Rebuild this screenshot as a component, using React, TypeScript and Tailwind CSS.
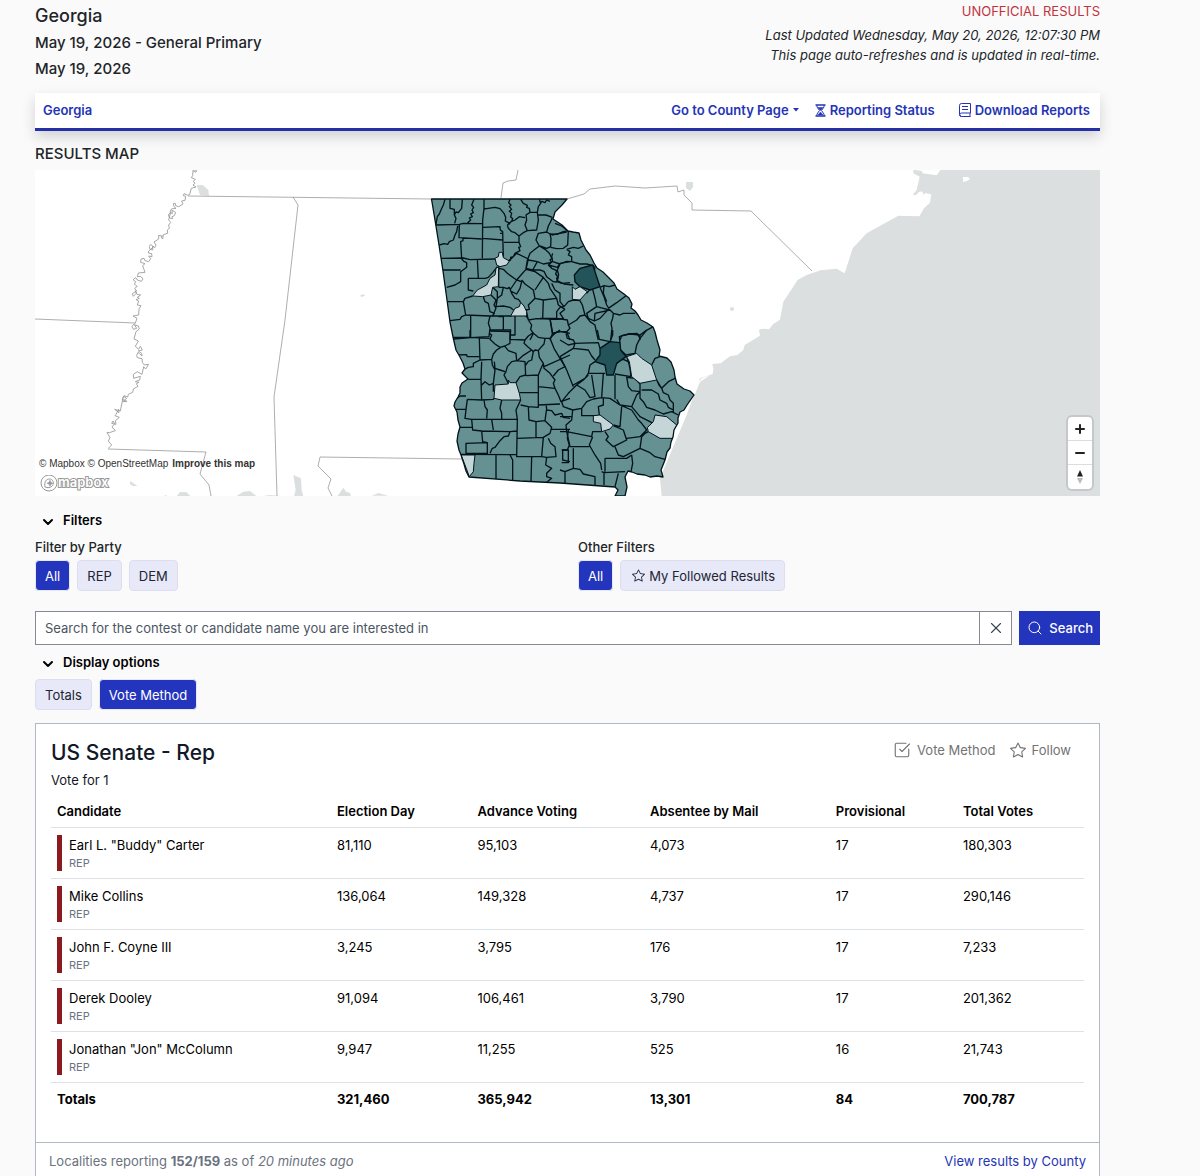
import React, { useState } from "react";
import { ChevronDown, Search, SquareCheckBig, X } from "lucide-react";
import { BsStar } from "react-icons/bs";

const methods = ["Election Day", "Advance Voting", "Absentee by Mail", "Provisional", "Total Votes"];

const candidates = [
  { name: 'Earl L. "Buddy" Carter', party: "REP", votes: ["81,110", "95,103", "4,073", "17", "180,303"] },
  { name: "Mike Collins", party: "REP", votes: ["136,064", "149,328", "4,737", "17", "290,146"] },
  { name: "John F. Coyne III", party: "REP", votes: ["3,245", "3,795", "176", "17", "7,233"] },
  { name: "Derek Dooley", party: "REP", votes: ["91,094", "106,461", "3,790", "17", "201,362"] },
  { name: 'Jonathan "Jon" McColumn', party: "REP", votes: ["9,947", "11,255", "525", "16", "21,743"] },
];

const totals = ["321,460", "365,942", "13,301", "84", "700,787"];

const GEORGIA =
  "M431.5 199L435 220 439 245 443 271 447 300 450 322 453 337 456 350 460 357 463 363 465 369 462 373 465 376 468 379 462 383 460 387 460 393 458 397 455 402 454 406 457 412 458 420 460 427 458 434 457 441 459 450 461 455 464 464 466 471 469 477 520 481 560 483 615 487 618 490 615 496 625 496 627 487 625 477 628 471 632 472 637 474 645 475 650 477 657 476 663 477 661 470 665 460 667 452 670 448 671 442 673 437 674 430 678 423 678 418 680 412 684 410 687 405 694 395 690 391 684 389 677 384 675 377 674 370 671 362 667 358 663 357 659 356 660 350 657 340 655 332 653 327 647 323 641 320 638 315 635 311 631 308 632 304 629 298 624 294 617 289 614 283 608 277 603 272 597 268 594 263 590 255 586 250 584 246 581 240 579 233 573 232 568 231 562 225 553 219 555 212 562 205 567 199Z";

// County lines, drawn one quarter of the state at a time
const NORTHWEST =
  "M48 105L118 103 130 100 187 101M75 28L70 45 64 58 58 72 52 80 48 102M90 28V55L103 58V75L108 85 104 100M127 28L125 55 115 68 108 66 103 75M162 28L155 45 161 52 156 60 160 68 152 72 157 80 148 84 152 90 143 98M192 28V55L188 90 187 205M192 57L205 55 225 52 240 56 252 70 257 82 256 93 264 97 270 103M270 28L266 38 273 45 268 50 275 58 268 64 275 70 272 80 278 86 275 94 262 105M188 112L240 110 241 120 248 125 250 200M118 103L117 143 185 147M113 108L110 125 105 135 100 150 88 155 83 163 72 161 58 165M129 145V152L122 155 125 205M63 205L130 204 150 209 225 207M188 145L248 150M240 130H250M252 157H297M262 105L265 115 275 125 285 128 297 138V157L302 170 296 172 300 182 285 190 280 200 272 202V210L262 215M302 28L310 40 322 46 320 52 328 55 330 67M275 94L285 90 298 80 315 83M330 67L318 75 320 90 315 105 322 122 310 128 297 138M330 67L352 67 355 50 362 40 358 28M352 67L355 90 350 120 322 122M355 75L378 75 397 82M360 40L366 34 375 38 380 30 390 34M397 82L392 95 385 108 380 126 355 130 348 150 358 168 345 178 330 190 322 210M380 126L390 132 393 145 392 170 380 175 360 168M390 132L410 133 430 125 445 122M445 122L443 165 430 175 410 176 392 172M172 208L175 265M125 207L133 215 140 218V232L122 245V275L105 285 80 292M66 240H122M145 265H195L205 262 218 248 232 230M145 265V300L160 303M158 318L135 325 130 335H83M130 335L137 375 210 378M137 375L125 380 120 388 90 392M152 377V443L100 447M210 378L205 400 210 415 207 440 152 443M190 320L195 335 205 340 210 365 223 370 215 380M213 315L228 330 222 345 228 355 222 368M228 350L250 348 270 352 280 360M218 292L232 305V325L228 350M236 292H250L245 315 232 325M250 292L262 296 268 292 275 310 285 325 295 328 302 337M236 230V292M238 235L250 238 262 250 290 270M262 215L275 205 290 190 325 207 318 238 303 255 290 270 280 285 270 300M290 270L305 275 300 295 290 312 275 305M305 270L315 282 340 300 345 325M318 238L345 245 370 262 358 280 345 300M322 210L318 235 338 240 352 215 325 210M352 215L370 222 395 217M358 168L375 178 388 190 396 205 390 210 395 217 385 225 395 235 410 242 407 252 415 262 410 276 400 275 380 260 372 244 360 240 340 240M385 225L412 232 420 220 450 215M412 275L425 280 450 278M370 262L385 280 390 295 400 310 410 325 370 330 345 325M345 325L335 335 325 345 328 358 318 360 325 390M275 378H210M250 380V420H272L270 450M250 380L235 380M250 420H210M285 378V435H272M325 390L350 386 390 387M325 390L335 405 332 418 340 430 330 450M370 330L368 387M410 325L415 345 435 358M390 387L397 430 420 424 450 430M435 358L420 370 430 385 415 388 390 387M318 378L326 388";

const NORTHEAST =
  "M80 178L100 172 115 175 130 168M80 178L90 185 85 195 95 200V215L120 222 140 222 162 228M38 190L35 200 38 215 60 222 80 214 95 215M60 222L52 240 56 255 50 265 52 272 72 282 100 285M35 280L45 300 60 310V335L72 350M72 350L85 335 100 330 120 332M72 350L60 352 50 365V385L82 390 85 405 110 390 120 378 135 375 127 345 120 332M0 385H50M150 298L140 310M158 298L165 325 170 350 190 355 210 360 200 345 192 320 180 292M180 292L192 287 208 290 225 285M192 287L190 310 200 335M205 355L230 338 258 317M210 360L220 370 240 375 250 370 285 370M220 370L218 385 213 400 216 415 212 450M170 350L140 370 145 385 163 393 165 370 210 360M163 393L180 385 205 358M135 375L150 395 165 405 170 430 175 450M300 435L318 422 340 410M240 450L245 437 270 432 300 435 300 450M85 405L90 415 80 425 90 450M30 385L38 430 60 425 80 425M38 430L30 450M45 100L65 108 80 120M35 135L60 130 80 126M165 228L163 245";

const SOUTHWEST =
  "M65 22H120V0M120 22L178 25M178 10L185 15 180 28 195 42 210 52 225 48 240 40V5L178 3M148 25L150 90M75 75L110 74 112 80 148 80M150 90L130 100 130 110 115 112 103 118M150 90L185 88 190 72 200 60 212 52M155 95L153 148 115 148M185 88L187 105 195 120 190 160 190 185M193 95L195 115 210 120 225 125M225 50L235 62 258 70 260 92 285 95 287 135 270 140 258 158M228 125L232 110 245 95 260 92M240 28L285 30 295 18 310 8M285 30L282 40 295 52 305 60 280 76 262 92M305 60L310 65 315 60 325 62 330 55 342 42 345 25 325 22 310 10M325 62L328 82 340 100 332 118 325 135 287 137M310 65L305 90 295 94 287 105M228 125L222 135 235 160M153 148L155 210 112 208M155 165L165 155 178 165 190 160M192 205L190 208 155 210M325 135V232L295 230 272 225M268 188H325M272 210L258 240 262 268 260 380M108 198L90 198 80 205M112 208L108 238H78M108 238L105 265 125 268 128 300 155 303 240 305 260 303M125 268H262M162 210L165 230 172 240 170 265M215 210L210 235 215 250V268M185 268L190 300M88 292H128M155 303L158 335 172 338V370H108V340L172 338M240 305L235 318 222 320 210 332 195 352 187 355 180 370M93 373L260 374V380L335 380M260 325L340 322 335 380M295 230L297 270 318 275V322M318 275L345 272 350 235 348 225M325 170L375 175M325 225L390 222M340 100L342 115 360 130 375 150 370 160 375 175 385 195 393 215 420 205M342 110L420 75M360 25L372 55 390 85 405 110 385 120 370 138M390 0L375 10 360 25 345 25M345 272L365 292 360 310 340 322M365 298L420 298M355 325L362 340 375 350 378 380 350 382M348 240L365 242 375 255 395 250 400 262 420 265M198 375V447M240 375L248 390V450M305 380L303 455M335 380L350 382 347 405 365 415 350 430 350 440 365 445 350 457M415 300L412 325 418 345 412 360H398V390L420 395";

const SOUTHEAST =
  "M0 80L40 55 85 60 95 78 105 90M40 55L45 40 115 38 120 55M0 30L25 45 45 40M18 10L22 25 40 30 45 40M0 80L20 120 40 170M112 0L118 28 150 35 158 15 158 0M180 38L178 20 205 12 232 10M240 25L230 45 225 70M232 10L240 25 260 0M182 60L198 75 225 70M170 100L178 90 190 88 205 95 210 115 213 140 165 132M200 78L205 95M275 105L285 85 300 80M290 150L305 175 325 155 345 145M290 150L297 165 305 175 310 188 325 195 330 210 340 220 340 245M40 165L75 145 85 130 90 105 105 95M85 130L135 130M95 135L105 200 90 203 75 180 50 165 25 190 5 215 10 230 38 240M50 165L70 150 85 135M38 240L65 235 80 215 100 207 125 203M130 130L125 203 150 205 180 225M165 135V208M170 208L180 225 215 230 230 195 240 185M200 140L205 170 215 182 240 185 240 162M245 180L275 180 295 192 300 210 320 220 325 232 340 240M240 185L240 205 250 215 260 232 285 240 310 252 335 245 355 255M215 230L240 260 280 280M200 142L225 145 240 162M185 230L180 290 160 285M180 225L215 240 235 270 245 280 260 300 240 320 200 325M130 203L130 225 115 230 118 255M65 235V257H115M38 240L35 270 18 285 20 305 95 320 98 305 125 305M0 260H35M0 305H20L30 350H88M135 305L145 320 138 330 160 350 180 340 200 330 190 300 160 287M98 320L88 345 105 375 122 400 125 420M40 355V415M135 385L200 385 215 375M135 385V425M165 350L175 375 190 380 240 355 245 320M240 355L270 368 285 380 315 388M265 305L255 310 245 320M215 375L218 400 213 425M125 425L132 428 195 425M40 415L60 418 70 432 105 440V465M15 460L15 425 40 415M132 428L132 465M175 430L165 470M5 360H25V398H5M0 420L15 425";

const RIVER =
  "M485 14L500 16 497 22 489 17 488 32 484 38 496 43 490 49 495 55 489 60 498 66 484 70 479 88 474 91 462 86 460 92 467 94 465 106 455 108 459 117 446 125 437 122 436 115 430 116 432 125 438 130 424 132 420 142 427 146 426 136 437 142 433 152 426 155 428 161 419 159 415 150 422 142 416 165 422 172 416 180 418 190 412 195 413 205 400 209 398 222 393 216 397 213 386 211 386 222 372 231 378 240 374 248 368 243 368 255 360 253 358 244 362 238 370 246 356 258 355 264 365 266 366 275 356 273 362 281 356 290 345 287 342 280 333 282 332 292 345 296 338 302 345 322 325 324 322 335 332 334 339 342 334 349 322 345 317 338 309 344 317 350 313 358 322 364 314 370 320 378 307 386 310 394 319 385 316 377 321 388 332 390 322 397 328 400 318 404 326 408 322 420 333 422 327 432 326 450 309 453 321 460 316 474 306 484 310 493 320 490 313 479 325 483 328 492 318 500 312 522 325 528 316 544 326 553 331 544 337 555 325 558 335 565 336 573 324 562 320 571 322 578 336 581 337 592 343 600 356 598 347 612 341 605 336 628 322 620 310 628 311 640 331 634 329 645 316 650 327 652 319 656 324 664 310 672 308 682 295 688 293 696 282 692 277 703 291 709 278 710 290 700 280 694 271 738 254 733 267 743 266 733 258 748 255 752 268 757 256 767 258 778 245 775 249 768 254 776 246 786 256 797 238 803 231 802 240 818 235 828 245 840 235 850";

function ResultsMap() {
  return (
    <section className="relative h-[326px] overflow-hidden bg-white" aria-label="Results map">
      <svg className="h-full w-full" viewBox="35 170 1065 326" preserveAspectRatio="xMidYMid slice">
        <clipPath id="georgia-outline">
          <path d={GEORGIA} />
        </clipPath>

        {/* Water */}
        <g fill="#dbdfdf">
          <path transform="translate(700 165) scale(.33333)" d="M640 14L665 18 668 25 710 31 722 14H1202V995H-115L-120 940 -40 750 0 640 38 627 40 612 37 597 62 595 90 574 112 570 130 555 134 540 180 512 177 494 187 491 207 493 220 477 240 464 250 410 293 345 320 330 362 316 410 311 434 325 458 250 500 205 595 152 658 154 672 130 690 113 694 88 675 84 671 90 667 79 655 82 649 90 638 89 650 75 659 35 640 25Z" />
          <path transform="translate(30 165) scale(.33333)" d="M500 60L518 60 535 75 537 92 510 90ZM990 392L1000 387 1005 392 995 396ZM300 948L322 962 310 964 300 958ZM400 994L408 990 412 994ZM440 994L450 981 470 982 482 994ZM618 994L640 980 660 978 680 994ZM695 994L720 990 765 994ZM790 930L813 940 815 975 820 994H792L797 975ZM922 994L940 968 948 980 960 984 963 994ZM1025 992L1045 984 1075 992Z" />
          <path d="M686 182h7v5l-3 4-4-3z" />
          <circle cx="732" cy="309" r="2" />
        </g>
        <path d="M963 177h5l2 2-3 2-4 1z" fill="#fff" />
        <path d="M660 475L664 455 674 427 680 412 695 394 700 382 710 375 702 378 695 386 687 389 655 340 640 400z" fill="#fff" />

        {/* State lines */}
        <g fill="none" stroke="#999" strokeWidth="0.8">
          <path d="M188 196L431 199M293 197L298 205 285 320 274 397 277 496M35 319L135 323M108 449L206 452 200 474 209 485 211 496M320 457L462 459M320 457L318 466 331 479 328 488 332 496M501 198L503 183 508 181 516 180 518 170M567 199L584 194 590 189 615 186 645 188 677 186 678 192 684 190 684 195 692 203V210L751 211 812 271" />
          <path d={RIVER} transform="translate(30 165) scale(.33333)" strokeWidth="2.6" />
        </g>

        {/* Counties */}
        <path d={GEORGIA} fill="#669193" />
        <g clipPath="url(#georgia-outline)" stroke="#00131a" strokeWidth="4" strokeLinejoin="round">
          <g transform="translate(420 190) scale(.33333)">
            <path d={NORTHWEST} fill="none" />
            <path d="M225 205L235 200 237 187H247L250 203 268 213 260 225 240 230 230 225ZM236 230L235 290 218 292 213 315 188 320 158 318 172 300 200 285 210 265 225 255 228 235ZM302 337L312 348 320 365V378H272L285 355 298 350Z" fill="#c5d6d9" strokeWidth="3" />
          </g>
          <g transform="translate(540 190) scale(.33333)">
            <path d={NORTHEAST} fill="none" />
            <path d="M103 255L120 235 158 225 165 245 180 290 150 300 120 290 105 275Z" fill="#225459" />
            <path d="M97 290L105 298 120 290 142 305 120 330 97 328Z" fill="#c5d6d9" strokeWidth="3" />
          </g>
          <g transform="translate(430 330) scale(.33333)">
            <path d={SOUTHWEST} fill="none" />
            <path d="M195 165L235 162V150L240 158H258L268 190 272 210H215L192 205ZM93 375H135L132 400 130 425 118 440 103 400Z" fill="#c5d6d9" strokeWidth="3" />
          </g>
          <g transform="translate(560 330) scale(.33333)">
            <path d={SOUTHEAST} fill="none" />
            <path d="M150 35L180 38 182 60 198 80 170 100 160 135H140L135 105 105 95 120 75 120 55Z" fill="#225459" />
            <path d="M200 80L230 70 245 85 275 105 290 150 240 160 215 140 208 95ZM100 257L120 255 160 285 150 297 125 305 122 280 100 275ZM262 293L280 275 285 255 320 260 350 285 340 325 300 325 265 305Z" fill="#c5d6d9" strokeWidth="3" />
          </g>
        </g>
        <path d={GEORGIA} fill="none" stroke="#00131a" strokeWidth="1.3" strokeLinejoin="round" />
      </svg>

      {/* Attribution */}
      <div className="absolute bottom-1 left-1 font-['Liberation_Sans',sans-serif] text-[10px] leading-4 text-[#333]">
        <p className="flex gap-1">
          <span>© <a href="#mapbox">Mapbox</a> © <a href="#osm">OpenStreetMap</a></span>
          <a href="#improve" className="font-bold">Improve this map</a>
        </p>
        <a href="#mapbox" className="mt-1 flex h-4 items-center">
          <svg width="88" height="18" viewBox="0 0 88 18" aria-label="mapbox">
            <g fill="#fff" stroke="#999" strokeWidth="1">
              <circle cx="10" cy="8" r="8" />
              <path d="M6 12c-1-5 1-8 4.500-8s5 4 3 6.500-5 2.500-7.500 1.500z" />
              <path d="M11 5l1 2.200 2.200 1-2.200 1-1 2.200-1-2.200-2.200-1 2.200-1z" fill="#999" strokeWidth="0.4" />
            </g>
            <text x="19" y="12" fontFamily="Inter, sans-serif" fontSize="13" fontWeight="600" fill="#fff" stroke="#999" strokeWidth="2" paintOrder="stroke">mapbox</text>
          </svg>
        </a>
      </div>

      {/* Zoom controls */}
      <div className="absolute right-2 bottom-[7px] flex w-6 flex-col divide-y divide-[#ddd] rounded bg-white ring-2 ring-black/10">
        <button className="flex h-6 items-center justify-center" aria-label="Zoom in">
          <svg width="10" height="10" viewBox="0 0 10 10" stroke="#222" strokeWidth="2" strokeLinecap="round"><path d="M5 1v8M1 5h8" /></svg>
        </button>
        <button className="flex h-6 items-center justify-center" aria-label="Zoom out">
          <svg width="10" height="10" viewBox="0 0 10 10" stroke="#222" strokeWidth="2" strokeLinecap="round"><path d="M1 5h8" /></svg>
        </button>
        <button className="flex h-6 items-center justify-center" aria-label="Reset bearing">
          <svg width="8" height="16" viewBox="0 0 8 16"><path d="M1 7.500L4 1l3 6.500z" fill="#222" /><path d="M1 9l3 6 3-6z" fill="#bbb" /></svg>
        </button>
      </div>
    </section>
  );
}

type PillProps = { active: boolean; onClick: () => void; children: React.ReactNode };

function Pill({ active, onClick, children }: PillProps) {
  return (
    <button
      onClick={onClick}
      aria-pressed={active}
      className={
        active
          ? "flex h-[31px] items-center gap-1 rounded border border-[#e6e7f7] bg-[#2435bd] px-[9px] text-white"
          : "flex h-[31px] items-center gap-1 rounded border border-[#dcdef0] bg-[#e8e9f8] px-[9px] text-[#212433]"
      }
    >
      {children}
    </button>
  );
}

function SectionToggle({ children }: { children: React.ReactNode }) {
  return (
    <button className="flex h-6 items-center gap-[7px] px-[5px] font-semibold text-black">
      <ChevronDown className="mt-1 h-4 w-4" strokeWidth={3} />
      {children}
    </button>
  );
}

export default function App() {
  const [party, setParty] = useState("All");
  const [followed, setFollowed] = useState(false);
  const [display, setDisplay] = useState("Vote Method");
  const [query, setQuery] = useState("");

  return (
    <div className="min-h-screen bg-[#fafafa] pr-[100px] pl-[35px] font-['Inter',sans-serif] text-[13px] leading-5 text-[#212529]">
      {/* Page header */}
      <header className="flex justify-between">
        <div className="pt-[3px] text-[15px] leading-[26px] font-medium">
          <h1 className="mb-px text-lg leading-[26px]">Georgia</h1>
          <h2>May 19, 2026 - General Primary</h2>
          <p>May 19, 2026</p>
        </div>
        <div className="pt-px text-right">
          <p className="mb-1 text-[#c1343f]">UNOFFICIAL RESULTS</p>
          <p className="italic">Last Updated Wednesday, May 20, 2026, 12:07:30 PM</p>
          <p className="italic">This page auto-refreshes and is updated in real-time.</p>
        </div>
      </header>

      <nav className="mt-[11px] flex h-[38px] items-center justify-between border-b-3 border-[#2530a8] bg-white pr-[10px] pb-px pl-2 font-semibold text-[#2434b5] shadow-[0_6px_14px_rgba(0,0,0,0.16)]">
        <a href="#georgia">Georgia</a>
        <div className="flex items-center">
          <button className="mr-4 flex items-center gap-1">
            Go to County Page
            <svg width="6" height="4" viewBox="0 0 6 4" fill="currentColor"><path d="M0 0h6L3 3.500z" /></svg>
          </button>
          <a href="#status" className="mr-6 flex items-center gap-1">
            <svg width="11" height="13" viewBox="0 0 11 13" fill="none" stroke="currentColor">
              <path d="M.5 1h10M.5 12h10" strokeWidth="1.500" />
              <path d="M2 1v2l2.500 3.500L2 10v2M9 1v2L6.500 6.500 9 10v2" />
              <path d="M3 3.500h5L5.500 6.500zM3 11l2.500-3L8 11z" fill="currentColor" strokeWidth=".5" />
            </svg>
            Reporting Status
          </a>
          <a href="#reports" className="flex items-center gap-1">
            <svg width="12" height="14" viewBox="0 0 12 14" fill="none" stroke="currentColor">
              <path d="M11.500 10V.5H2.500a2 2 0 0 0-2 2V11.500a2 2 0 0 0 2 2h9M11.500 10H2.500a1.700 1.700 0 0 0 0 3.400M11 10v3.500M3 3.500h6M3 6.500h6" />
            </svg>
            Download Reports
          </a>
        </div>
      </nav>

      <h2 className="mt-3 mb-[5px] text-[15px] leading-[22px] font-medium">RESULTS MAP</h2>
      <ResultsMap />

      {/* Filters */}
      <div className="mt-3">
        <SectionToggle>Filters</SectionToggle>
      </div>
      <div className="mt-[5px] grid grid-cols-[543px_1fr]">
        <div>
          <h3 className="font-medium">Filter by Party</h3>
          <div className="mt-[3px] flex gap-[7px]">
            {["All", "REP", "DEM"].map((p) => (
              <Pill key={p} active={party === p} onClick={() => setParty(p)}>{p}</Pill>
            ))}
          </div>
        </div>
        <div>
          <h3 className="font-medium">Other Filters</h3>
          <div className="mt-[3px] flex gap-[7px]">
            <Pill active={!followed} onClick={() => setFollowed(false)}>All</Pill>
            <Pill active={followed} onClick={() => setFollowed(true)}>
              <BsStar className="ml-[2px] h-[13px] w-[13px]" />
              My Followed Results
            </Pill>
          </div>
        </div>
      </div>

      <form className="mt-5 flex h-[34px]" onSubmit={(e) => e.preventDefault()}>
        <input
          type="text"
          aria-label="Search contests and candidates"
          placeholder="Search for the contest or candidate name you are interested in"
          value={query}
          onChange={(e) => setQuery(e.target.value)}
          className="min-w-0 flex-1 border border-[#858994] bg-white px-[9px] placeholder:text-[#4b5563]"
        />
        <button
          type="button"
          aria-label="Clear search"
          onClick={() => setQuery("")}
          className="flex w-8 items-center justify-center border border-l-0 border-[#858994] bg-white text-[#374151]"
        >
          <X className="h-[18px] w-[18px]" strokeWidth={1.5} />
        </button>
        <button type="submit" className="ml-[7px] flex w-[81px] items-center justify-between bg-[#2435bd] px-[7px] font-medium text-white">
          <Search className="ml-px h-4 w-4" strokeWidth={1.5} />
          Search
        </button>
      </form>

      <div className="mt-[5px]">
        <SectionToggle>Display options</SectionToggle>
      </div>
      <div className="mt-[5px] flex gap-[7px]">
        {["Totals", "Vote Method"].map((d) => (
          <Pill key={d} active={display === d} onClick={() => setDisplay(d)}>{d}</Pill>
        ))}
      </div>

      {/* Contest card */}
      <section className="mt-[13px] border border-[#b0b8c5] bg-white text-black">
        <div className="px-[15px]">
          <div className="flex items-start justify-between pt-[14px] text-[#111827]">
            <div>
              <h2 className="text-[21px] leading-[30px] font-medium">US Senate - Rep</h2>
              <p className="mt-[2px]">Vote for 1</p>
            </div>
            <div className="flex gap-[14px] pt-[2px] pr-[13px] text-[#737373]">
              <button className="flex items-center gap-[6px]">
                <SquareCheckBig className="h-[18px] w-[18px]" strokeWidth={1.5} />
                Vote Method
              </button>
              <button className="flex items-center gap-[6px]">
                <BsStar className="h-4 w-4" />
                Follow
              </button>
            </div>
          </div>

          <table className="mt-[5px] w-full table-fixed text-left">
            <colgroup>
              <col className="w-[27.1%]" />
              <col className="w-[13.6%]" />
              <col className="w-[16.7%]" />
              <col className="w-[18%]" />
              <col className="w-[12.3%]" />
              <col />
            </colgroup>
            <thead>
              <tr className="h-8 border-b border-[#dee2e6]">
                <th className="px-[6px] font-semibold">Candidate</th>
                {methods.map((m) => (
                  <th key={m} className="px-[6px] font-semibold">{m}</th>
                ))}
              </tr>
            </thead>
            <tbody>
              {candidates.map((c) => (
                <tr key={c.name} className="border-b border-[#dee2e6]">
                  <td className="px-[6px] py-[7px]">
                    <div className="border-l-[5px] border-[#8b1a1f] pl-[7px]">
                      <p className="leading-5">{c.name}</p>
                      <p className="text-[11px] leading-4 text-[#6b7280]">{c.party}</p>
                    </div>
                  </td>
                  {c.votes.map((v, i) => (
                    <td key={i} className="px-[6px] py-[7px] align-top">{v}</td>
                  ))}
                </tr>
              ))}
              <tr className="h-[34px] font-bold">
                <td className="px-[6px]">Totals</td>
                {totals.map((t) => (
                  <td key={t} className="px-[6px]">{t}</td>
                ))}
              </tr>
            </tbody>
          </table>
        </div>
        <footer className="mt-[26px] flex h-9 items-center justify-between border-t border-[#b0b8c5] px-[13px] text-[#6b7280]">
          <p>
            Localities reporting <strong>152/159</strong> as of <em>20 minutes ago</em>
          </p>
          <a href="#counties" className="text-[#2434b5]">View results by County</a>
        </footer>
      </section>
    </div>
  );
}
